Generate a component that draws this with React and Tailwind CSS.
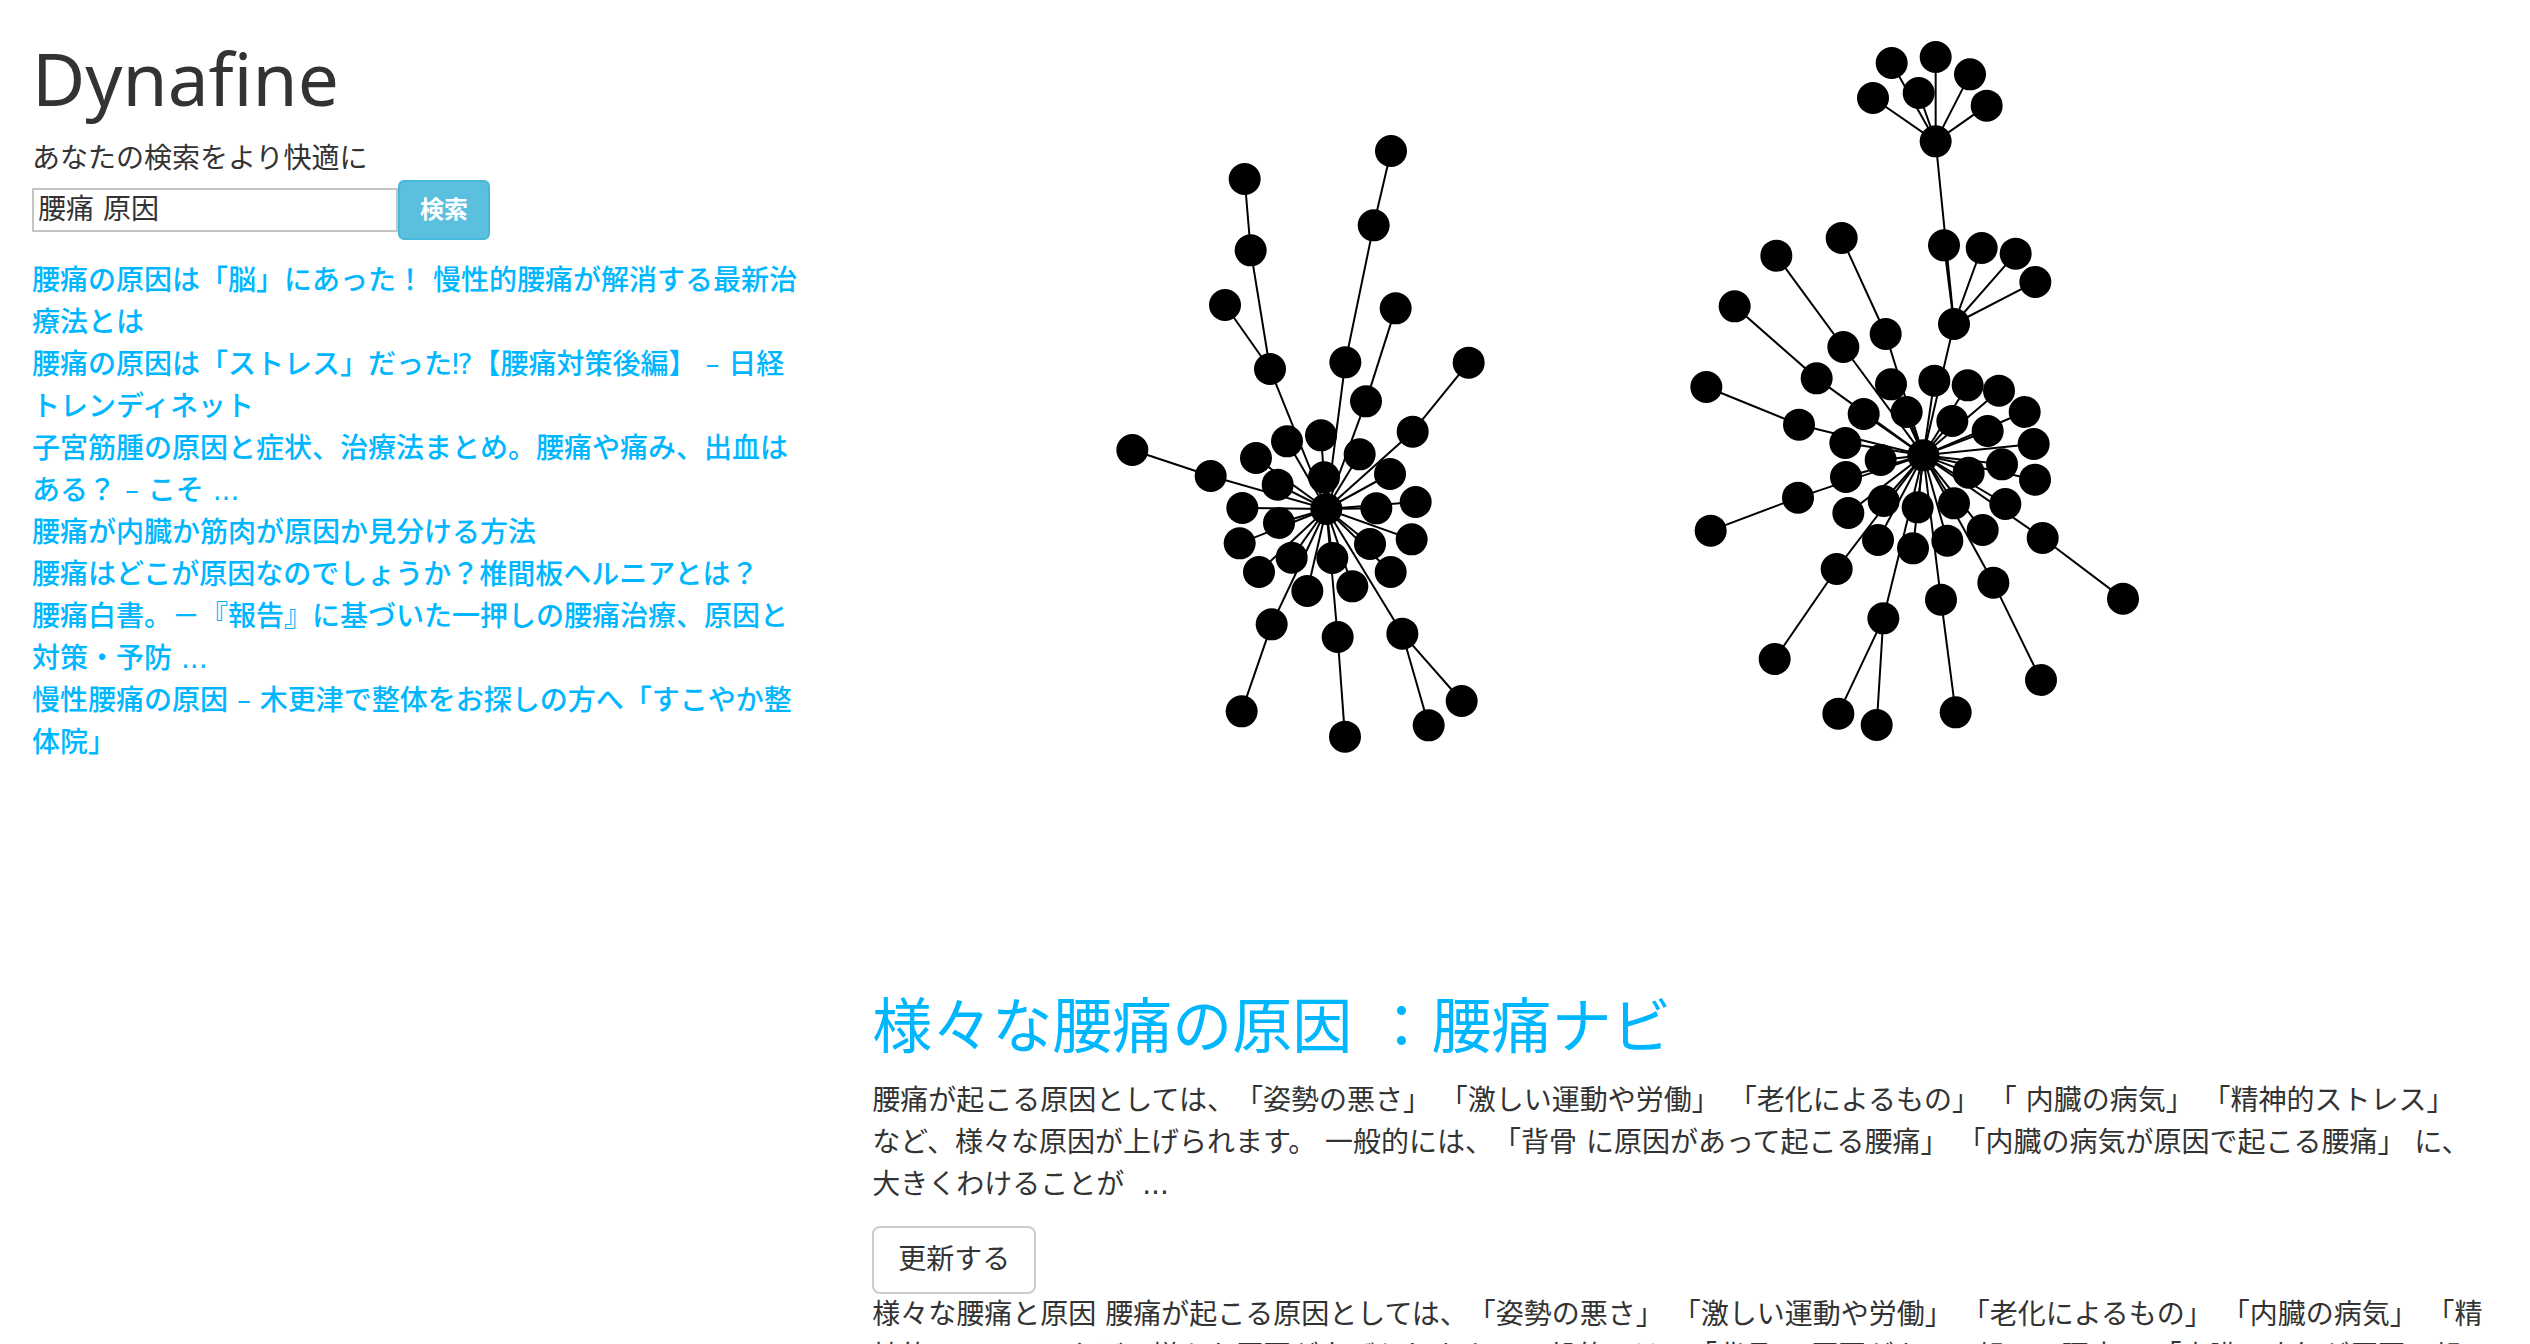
const LEFT_GRAPH = {
  hub: [679, 267],
  leaves: [
    [468, 114], [561, 64], [663, 46], [779, 103], [870, 162], [533, 194], [672, 172],
    [427, 264], [537, 309], [419, 370], [477, 456], [575, 413], [622, 513], [697, 414],
    [757, 499], [810, 372], [872, 456], [935, 358], [947, 246], [829, 265],
  ],
  branches: [
    { at: [510, -153], children: [{ at: [452, -509], children: [{ at: [434, -723] }] }, { at: [375, -345] }] },
    { at: [736, -173], children: [{ at: [821, -584], children: [{ at: [873, -807] }] }] },
    { at: [798, -56], children: [{ at: [887, -335] }] },
    { at: [938, 35], children: [{ at: [1106, -172] }] },
    { at: [332, 168], children: [{ at: [97, 90] }] },
    { at: [515, 613], children: [{ at: [425, 874] }] },
    { at: [713, 651], children: [{ at: [735, 950] }] },
    { at: [907, 641], children: [{ at: [986, 916] }, { at: [1085, 843] }] },
  ],
};

const RIGHT_GRAPH = {
  hub: [790, 346],
  leaves: [
    [693, 133], [740, 216], [823, 122], [923, 136], [1017, 152], [877, 243], [983, 273],
    [1094, 216], [1121, 312], [1026, 373], [1125, 419], [926, 398], [1036, 492], [882, 490],
    [968, 570], [862, 602], [759, 625], [773, 502], [654, 600], [671, 483], [565, 519],
    [558, 411], [662, 360], [556, 309], [611, 222],
  ],
  branches: [
    {
      at: [882, -48],
      children: [
        { at: [852, -284] },
        { at: [965, -276] },
        { at: [1067, -259] },
        { at: [1126, -174] },
        {
          at: [827, -596],
          children: [
            { at: [639, -726] }, { at: [695, -831] }, { at: [776, -741] },
            { at: [827, -849] }, { at: [930, -797] }, { at: [980, -703] },
          ],
        },
      ],
    },
    { at: [550, 21], children: [{ at: [349, -253] }] },
    { at: [677, -18], children: [{ at: [545, -306] }] },
    { at: [470, 115], children: [{ at: [224, -101] }] },
    { at: [417, 254], children: [{ at: [139, 141] }] },
    { at: [414, 473], children: [{ at: [152, 572] }] },
    { at: [530, 687], children: [{ at: [344, 957] }] },
    { at: [670, 835], children: [{ at: [535, 1121] }, { at: [650, 1155] }] },
    { at: [843, 779], children: [{ at: [887, 1117] }] },
    { at: [1000, 728], children: [{ at: [1143, 1020] }] },
    { at: [1148, 594], children: [{ at: [1389, 776] }] },
  ],
};

function Branch({ from, node }) {
  const [x, y] = node.at;
  return (
    <>
      <line x1={from[0]} y1={from[1]} x2={x} y2={y} stroke="black" strokeWidth="6" />
      <circle cx={x} cy={y} r="48" />
      {(node.children || []).map((child, i) => (
        <Branch key={i} from={node.at} node={child} />
      ))}
    </>
  );
}

function Cluster({ graph, transform }) {
  return (
    <g transform={transform}>
      {graph.branches.map((b, i) => (
        <Branch key={i} from={graph.hub} node={b} />
      ))}
      {graph.leaves.map((at, i) => (
        <Branch key={i} from={graph.hub} node={{ at }} />
      ))}
      <circle cx={graph.hub[0]} cy={graph.hub[1]} r="48" />
    </g>
  );
}

const RESULTS = [
  "腰痛の原因は「脳」にあった！ 慢性的腰痛が解消する最新治療法とは",
  "腰痛の原因は「ストレス」だった⁉【腰痛対策後編】 – 日経トレンディネット",
  "子宮筋腫の原因と症状、治療法まとめ。腰痛や痛み、出血はある？ – こそ ...",
  "腰痛が内臓か筋肉が原因か見分ける方法",
  "腰痛はどこが原因なのでしょうか？椎間板ヘルニアとは？",
  "腰痛白書。－『報告』に基づいた一押しの腰痛治療、原因と対策・予防 ...",
  "慢性腰痛の原因 – 木更津で整体をお探しの方へ「すこやか整体院」",
];

export default function App() {
  return (
    <div
      lang="ja"
      className="grid grid-cols-3 bg-white font-['DejaVu_Sans','Noto_Sans_CJK_JP',sans-serif] text-[28px] leading-[42px] text-[#333333] [text-spacing-trim:space-all]"
    >
      <aside className="px-8 pt-9">
        <h1 className="font-['Noto_Sans',sans-serif] text-[73px] leading-[84px]">Dynafine</h1>
        <p className="mt-[18px]">あなたの検索をより快適に</p>
        <form className="flex items-center" onSubmit={(e) => e.preventDefault()}>
          <input
            type="text"
            aria-label="検索キーワード"
            defaultValue="腰痛 原因"
            className="h-11 w-[366px] border-2 border-[#c4c4c4] px-1 pb-1.5"
          />
          <button
            type="submit"
            className="h-[60px] rounded-md border-2 border-[#46b8da] bg-[#5bc0de] px-5 text-[24px] font-bold text-white"
          >
            検索
          </button>
        </form>
        <ul className="mt-5">
          {RESULTS.map((title) => (
            <li key={title}>
              <a href="#" className="font-medium text-[#00b7ff]">{title}</a>
            </li>
          ))}
        </ul>
      </aside>
      <main className="col-span-2 pl-[29px] pr-[42px]">
        <svg viewBox="0 0 4847 2880" className="block h-auto w-full" role="img" aria-label="検索結果の関連図">
          <Cluster graph={LEFT_GRAPH} transform="translate(684 1260)" />
          <Cluster graph={RIGHT_GRAPH} transform="translate(2364 1020)" />
        </svg>
        <h2 className="mt-[34px] text-[60px] leading-[66px] text-[#00b7ff]">
          <a href="#">様々な腰痛の原因 ：腰痛ナビ</a>
        </h2>
        <p className="mt-5">
          腰痛が起こる原因としては、「姿勢の悪さ」 「激しい運動や労働」 「老化によるもの」 「 内臓の病気」 「精神的ストレス」 など、様々な原因が上げられます。 一般的には、「背骨 に原因があって起こる腰痛」 「内臓の病気が原因で起こる腰痛」 に、大きくわけることが&nbsp; ...
        </p>
        <button type="button" className="mt-5 block h-[68px] rounded-lg border-2 border-[#cccccc] px-6">
          更新する
        </button>
        <p>
          様々な腰痛と原因 腰痛が起こる原因としては、「姿勢の悪さ」 「激しい運動や労働」 「老化によるもの」 「内臓の病気」 「精神的ストレス」など、様々な原因が上げられます。 一般的には、「背骨 に原因があって起こる腰痛」 「内臓の病気が原因で起こる腰痛」に、大きくわけることができます。
        </p>
      </main>
    </div>
  );
}
